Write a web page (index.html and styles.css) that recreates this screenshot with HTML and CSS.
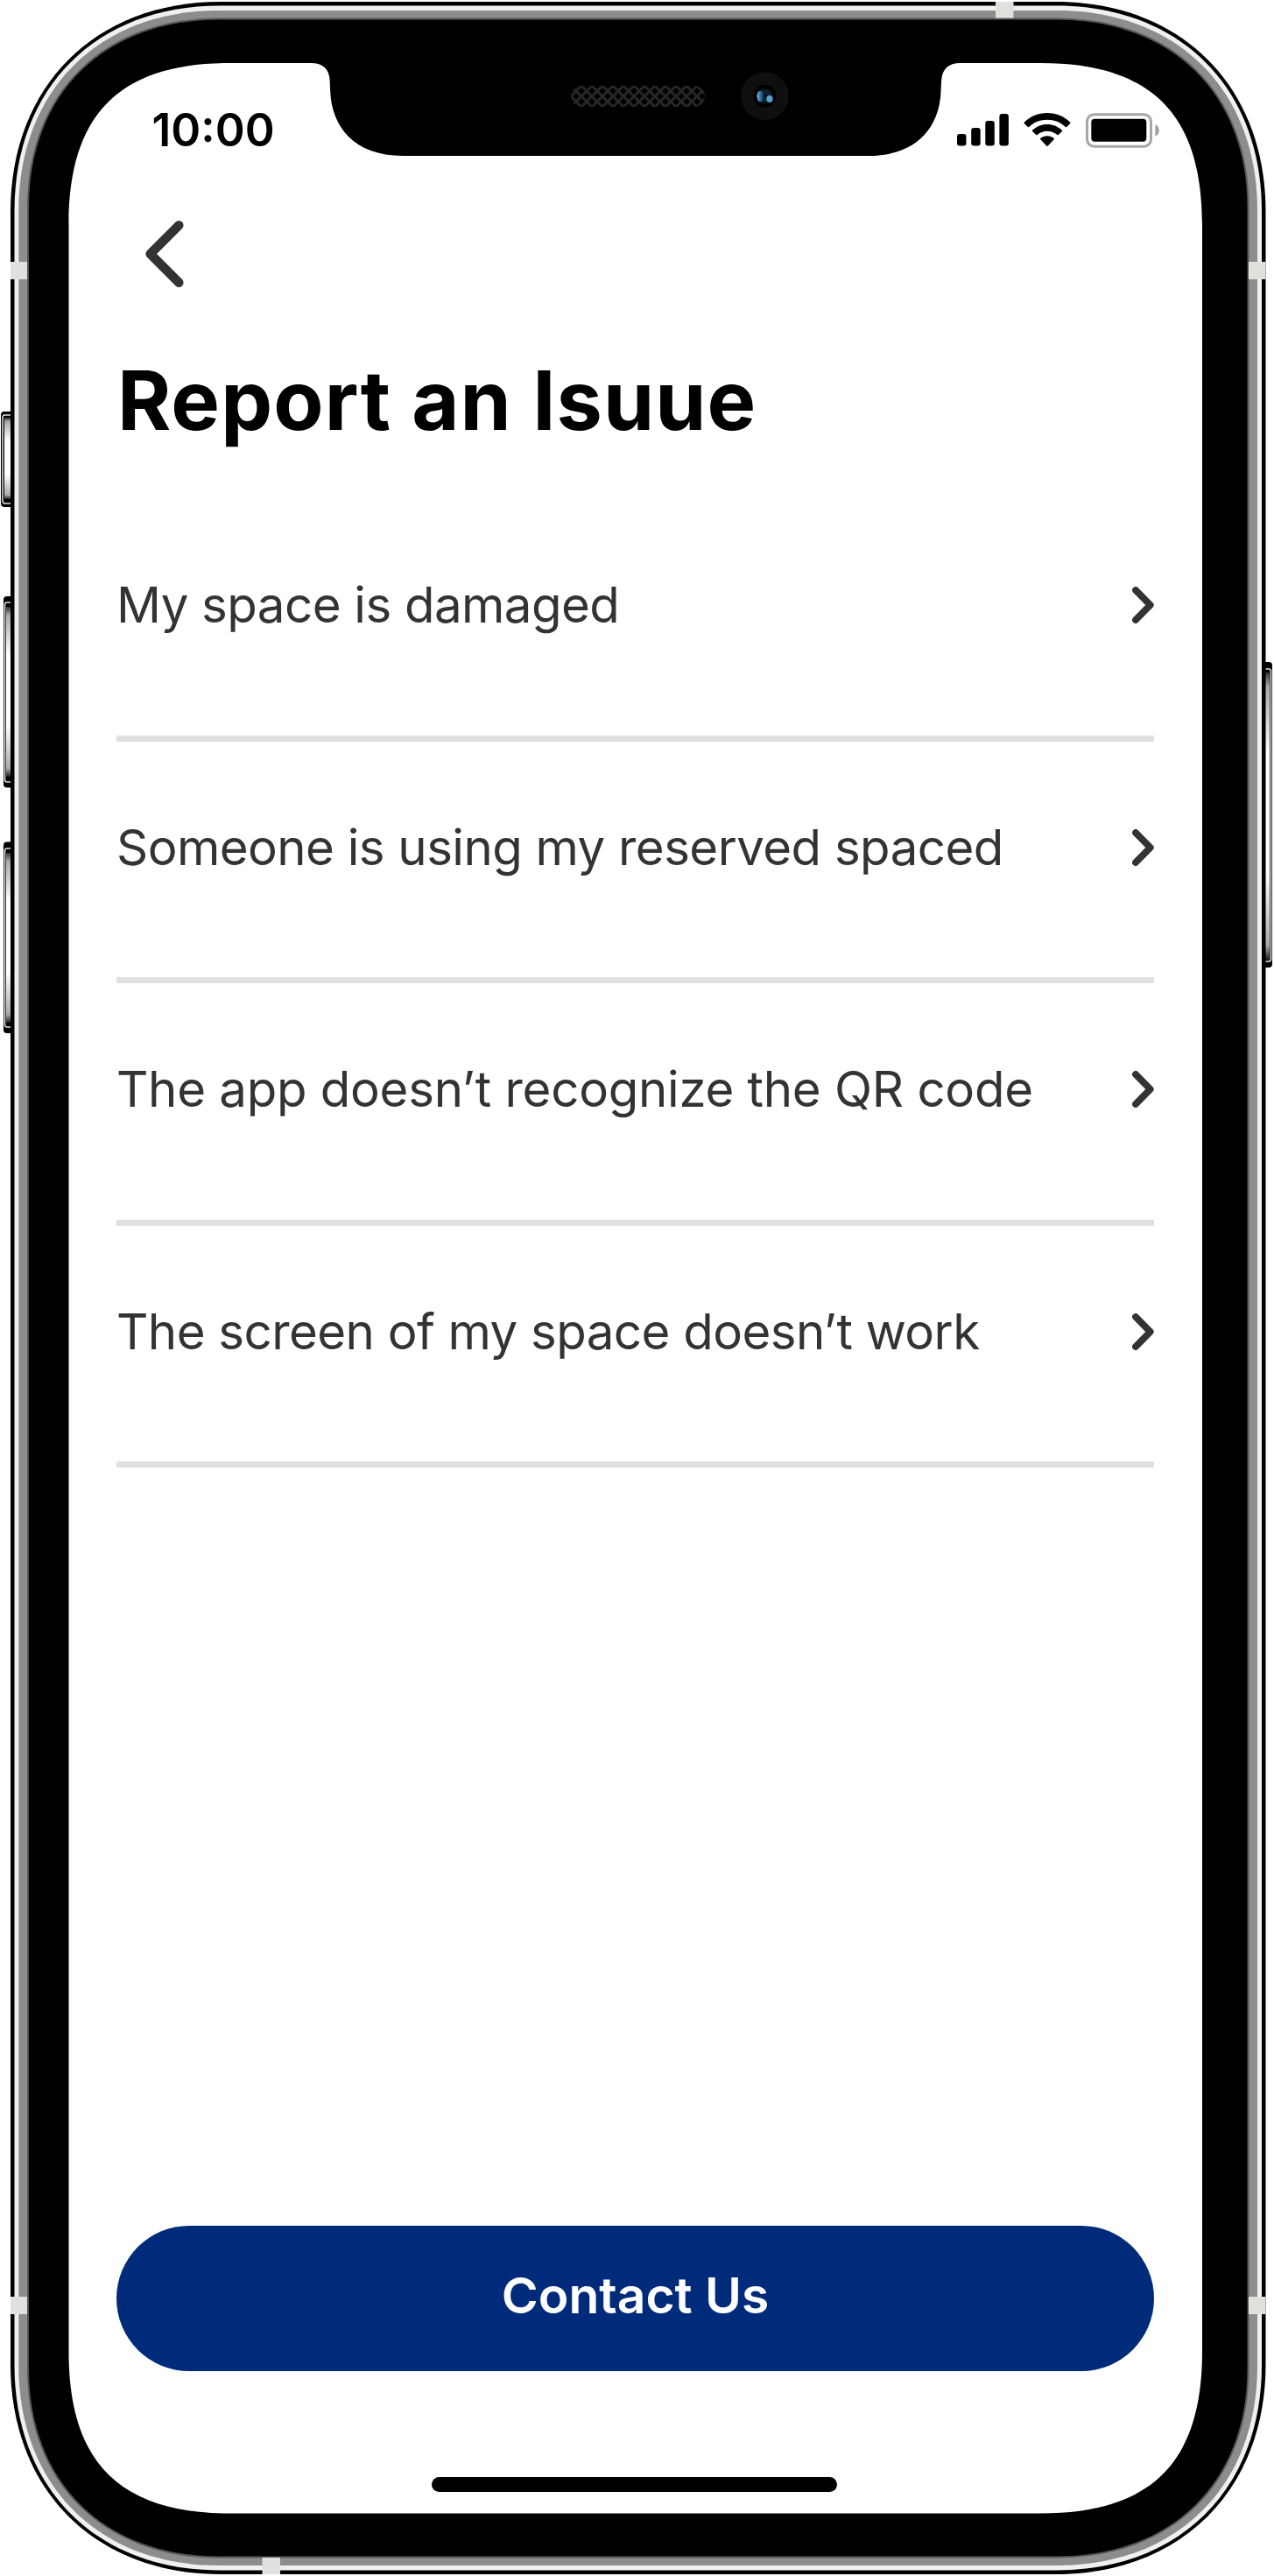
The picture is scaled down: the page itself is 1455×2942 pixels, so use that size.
FILE: index.html
```
<!DOCTYPE html>
<html lang="en">
<head>
<meta charset="utf-8">
<title>Report an Issue</title>
<link rel="stylesheet" href="styles.css">
</head>
<body>
<div class="device">
  <svg class="frame" viewBox="0 0 1455 2942" aria-hidden="true">
    <defs>
      <linearGradient id="keyShade" x1="0" y1="0" x2="0" y2="1">
        <stop offset="0" stop-color="#333"/>
        <stop offset=".05" stop-color="#aaa"/>
        <stop offset=".28" stop-color="#fff"/>
        <stop offset=".7" stop-color="#fff"/>
        <stop offset=".95" stop-color="#aaa"/>
        <stop offset="1" stop-color="#222"/>
      </linearGradient>
      <pattern id="mesh" width="12" height="12" patternUnits="userSpaceOnUse" x="652" y="98">
        <path d="M-2 -2L14 14M14 -2L-2 14" stroke="#272727" stroke-width="3"/>
      </pattern>
      <radialGradient id="lens">
        <stop offset="0" stop-color="#0b0f18"/>
        <stop offset=".6" stop-color="#122238"/>
        <stop offset="1" stop-color="#05070c"/>
      </radialGradient>
      <linearGradient id="glintLeft">
        <stop offset="0" stop-color="#8fb6e8"/>
        <stop offset=".5" stop-color="#2f6f9f"/>
        <stop offset="1" stop-color="#163a58"/>
      </linearGradient>
      <linearGradient id="glintRight">
        <stop offset="0" stop-color="#39b6c4"/>
        <stop offset="1" stop-color="#7a8fe0"/>
      </linearGradient>
    </defs>

    <!-- side keys -->
    <g class="key">
      <rect x="1" y="470" width="16" height="109" rx="4"/>
      <rect x="4" y="681" width="14" height="218.500" rx="4"/>
      <rect x="4" y="961.500" width="14" height="218.500" rx="4"/>
      <rect x="1439" y="756" width="14" height="349" rx="4"/>
    </g>
    <g class="key-line">
      <path d="M12 474H5.500Q3 474 3 477V572Q3 575 5.500 575H12"/>
      <path d="M12 688H8Q5.500 688 5.500 691V890Q5.500 893 8 893H12"/>
      <path d="M12 969H8Q5.500 969 5.500 972V1170Q5.500 1173 8 1173H12"/>
      <path d="M1445 764H1449Q1451.500 764 1451.500 767V1095Q1451.500 1098 1449 1098H1445"/>
    </g>
    <rect x="5" y="477" width="8" height="93" fill="url(#keyShade)"/>
    <rect x="7" y="693" width="6" height="194" fill="url(#keyShade)"/>
    <rect x="7" y="974" width="6" height="194" fill="url(#keyShade)"/>
    <rect x="1444" y="768" width="6" height="328" fill="url(#keyShade)"/>

    <!-- body: outline, polished edge, brushed band, bezel -->
    <path fill="#000" d="M12 242C12 98.500 108.500 2 252 2H1205.500C1349 2 1445.500 98.500 1445.500 242V2700C1445.500 2843.500 1349 2940 1205.500 2940H252C108.500 2940 12 2843.500 12 2700Z"/>
    <path fill="#eff0ef" d="M16.500 241C16.500 100 110 6.500 251 6.500H1206.500C1347.500 6.500 1441 100 1441 241V2701C1441 2842 1347.500 2935.500 1206.500 2935.500H251C110 2935.500 16.500 2842 16.500 2701Z"/>
    <path fill="#8c8e8d" d="M21.300 240C21.300 103 113 12 250 12H1207.500C1344.500 12 1436 103 1436 240V2702C1436 2839 1344.500 2930 1207.500 2930H250C113 2930 21.300 2839 21.300 2702Z"/>
    <path fill="#000" stroke="#55575a" stroke-width="2" d="M32 237C32 106 119 21.500 250 21.500H1207C1338 21.500 1425.500 106 1425.500 237V2705C1425.500 2836 1338 2920.500 1207 2920.500H250C119 2920.500 32 2836 32 2705Z"/>

    <!-- antenna bands -->
    <g class="band">
      <rect x="12" y="299" width="19" height="20"/>
      <rect x="12" y="2623" width="19" height="20"/>
      <rect x="1426" y="299" width="19.500" height="20"/>
      <rect x="1426" y="2623" width="19.500" height="20"/>
      <rect x="1137" y="2" width="20.500" height="18.500"/>
      <rect x="299.500" y="2921" width="20.500" height="19"/>
    </g>

    <!-- display with notch -->
    <path fill="#fff" d="M78.500 257C78.500 130 136.500 72 263.500 72H355C369 72 376.500 79 376.700 93C376.900 97 377 101 377.200 105C379 144 404 178 460 178H992C1048 178 1073 144 1074.500 105C1074.700 101 1074.900 97 1075.100 93C1075.500 79 1083 72 1097 72H1188C1315 72 1373 130 1373 257V2685.500C1373 2812.500 1315 2870.500 1188 2870.500H263.500C136.500 2870.500 78.500 2812.500 78.500 2685.500Z"/>

    <rect x="652" y="98" width="153" height="24" rx="12" fill="url(#mesh)"/>
    <circle cx="873.500" cy="109.700" r="27.300" fill="#0f0f0f"/>
    <circle cx="873.500" cy="109.700" r="13" fill="#000"/>
    <circle cx="873.500" cy="109.700" r="9.500" fill="url(#lens)"/>
    <ellipse cx="868.300" cy="110" rx="3.800" ry="6.300" fill="url(#glintLeft)"/>
    <ellipse cx="879" cy="113" rx="3.600" ry="4" fill="url(#glintRight)"/>
  </svg>

  <main class="screen">
    <header class="status">
      <time class="clock">10:00</time>
      <div class="status-icons">
        <svg width="59" height="38" viewBox="0 0 59 38"><rect y="24" width="10.500" height="13.500" rx="3"/><rect x="16.200" y="17" width="10.500" height="20.500" rx="3"/><rect x="32.300" y="9" width="10.500" height="28.500" rx="3"/><rect x="48.400" y="1" width="10.500" height="36.500" rx="3"/></svg>
        <svg width="54" height="39" viewBox="0 0 54 39"><path d="M27 0C37 0 46.500 4 53.300 10.700Q53.800 11.300 53.300 11.900L49.200 16Q48.600 16.500 48 16C42.300 10.600 35 7.700 27 7.700S11.700 10.600 6 16Q5.400 16.500 4.800 16L.700 11.900Q.200 11.300 .700 10.700C7.500 4 17 0 27 0Z"/><path d="M27 13C33.500 13 39.400 15.500 43.900 19.700Q44.500 20.300 43.900 20.900L39.700 25.100Q39.100 25.600 38.500 25.100C35.400 22.300 31.400 20.700 27 20.700S18.600 22.300 15.500 25.100Q14.900 25.600 14.300 25.100L10.100 20.900Q9.500 20.300 10.100 19.700C14.600 15.500 20.500 13 27 13Z"/><path d="M27 26.300C30 26.300 32.600 27.300 34.700 29.100Q35.300 29.700 34.700 30.300L27.600 37.700Q27 38.300 26.400 37.700L19.300 30.300Q18.700 29.700 19.300 29.100C21.400 27.300 24 26.300 27 26.300Z"/></svg>
        <svg width="84" height="40" viewBox="0 0 84 40"><rect x="1.500" y="1.700" width="73" height="36.500" rx="8" fill="none" stroke="#a6a6a6" stroke-width="3"/><rect x="6.300" y="6.700" width="63" height="26" rx="4"/><path d="M79.300 13.300C85.300 15.500 85.300 24.500 79.300 26.700Z" fill="#a0a0a0"/></svg>
      </div>
    </header>

    <button class="back" aria-label="Back">
      <svg width="44" height="76" viewBox="0 0 44 76"><path d="M38.300 5.300L5.600 38L38.300 70.700"/></svg>
    </button>

    <h1 class="title">Report an Isuue</h1>

    <ul class="issues">
      <li class="issue"><span>My space is damaged</span><svg class="chevron" viewBox="0 0 25 42"><path d="M4 4L20.700 21L4 38"/></svg></li>
      <li class="issue"><span>Someone is using my reserved spaced</span><svg class="chevron" viewBox="0 0 25 42"><path d="M4 4L20.700 21L4 38"/></svg></li>
      <li class="issue issue-wide"><span>The app doesn’t recognize the QR code</span><svg class="chevron" viewBox="0 0 25 42"><path d="M4 4L20.700 21L4 38"/></svg></li>
      <li class="issue"><span>The screen of my space doesn’t work</span><svg class="chevron" viewBox="0 0 25 42"><path d="M4 4L20.700 21L4 38"/></svg></li>
    </ul>

    <footer class="footer">
      <button class="contact">Contact Us</button>
      <div class="home-bar"></div>
    </footer>
  </main>
</div>
</body>
</html>
```
FILE: styles.css
```
* { box-sizing: border-box; }

body {
  margin: 0;
  background: #fff;
  font-family: Inter, "Liberation Sans", sans-serif;
  color: #333;
}

.device {
  display: grid;
  width: 1455px;
  height: 2942px;
}

.frame,
.screen { grid-area: 1 / 1; }

.frame { width: 1455px; height: 2942px; }

.key { fill: #000; }
.key-line { fill: none; stroke: #e4e4e4; stroke-width: 1.5; }
.band { fill: #dfe1dc; }

.screen {
  display: flex;
  flex-direction: column;
  margin: 72px 82px 71.500px 78.500px;
  padding: 0 55px 24.500px 54.500px;
}

.status {
  display: flex;
  justify-content: space-between;
  height: 100px;
  padding: 44px 0 0 40.500px;
}

.clock {
  padding-top: 1px;
  font-size: 51.500px;
  font-weight: 600;
  line-height: 62px;
  color: #000;
}

.status-icons {
  display: flex;
  align-items: flex-start;
  gap: 17px;
  padding-top: 13px;
  margin-right: -5.500px;
}

.back {
  width: 44px;
  height: 76px;
  margin: 80px 0 0 33px;
  padding: 0;
  border: 0;
  background: none;
}

.back svg { display: block; }
.back path,
.chevron path {
  fill: none;
  stroke: #333;
  stroke-linecap: round;
  stroke-linejoin: round;
}
.back path { stroke-width: 10.500; }

.title {
  margin: 72px 0 0 1px;
  height: 170px;
  font-size: 93.500px;
  font-weight: 700;
  line-height: 114px;
  letter-spacing: 1.100px;
  color: #000;
  white-space: nowrap;
}

.issues {
  margin: 0;
  padding: 0;
  list-style: none;
}

.issue {
  display: flex;
  align-items: center;
  justify-content: space-between;
  height: 276.500px;
  padding-bottom: 27px;
  border-bottom: 7px solid #e0e0e0;
  font-size: 56.400px;
  line-height: 68px;
  letter-spacing: -.550px;
  white-space: nowrap;
}

.issue-wide { letter-spacing: -.280px; }

.chevron { width: 25px; height: 42px; }
.chevron path { stroke-width: 7.800; }

.footer {
  display: flex;
  flex-direction: column;
  align-items: center;
  gap: 121px;
  margin-top: auto;
}

.contact {
  width: 100%;
  height: 165.500px;
  padding: 0 0 6px;
  border: 0;
  border-radius: 83px;
  background: #002b7a;
  color: #fff;
  font-family: inherit;
  font-size: 57px;
  font-weight: 600;
  line-height: 70px;
}

.home-bar {
  width: 463px;
  height: 17.500px;
  margin-right: 3px;
  border-radius: 9px;
  background: #000;
}
```
